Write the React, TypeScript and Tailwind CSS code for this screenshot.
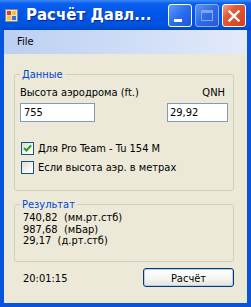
const font = { fontFamily: '"DejaVu Sans Condensed", "Liberation Sans", sans-serif' };

function TitleButton({ kind }: { kind: 'min' | 'max' | 'close' }) {
    if (kind === 'close') {
        return (
            <div className="w-[24px] h-[23px] rounded-[3px] border border-white bg-[linear-gradient(135deg,#f0a48a_0%,#e35a35_35%,#d1401c_100%)] flex items-center justify-center">
                <svg width="12" height="12" viewBox="0 0 12 12">
                    <path d="M1.5 1.5 L10.5 10.5 M10.5 1.5 L1.5 10.5" stroke="white" strokeWidth="2.4" strokeLinecap="square" />
                </svg>
            </div>
        );
    }
    if (kind === 'max') {
        return (
            <div className="w-[24px] h-[23px] rounded-[3px] border border-[#8eaff5] bg-[linear-gradient(135deg,#5e93f2_0%,#2f6ae6_50%,#2759d6_100%)] flex items-center justify-center">
                <div className="w-[12px] h-[11px] border border-[#7fa5f2] border-t-[3px]" />
            </div>
        );
    }
    return (
        <div className="w-[24px] h-[23px] rounded-[3px] border border-white bg-[linear-gradient(135deg,#5a9cff_0%,#2a6ef0_50%,#1d56de_100%)] flex items-end pl-[5px] pb-[4px]">
            <div className="w-[8px] h-[3px] bg-white" />
        </div>
    );
}

function CheckBox({ checked, label }: { checked: boolean; label: string }) {
    return (
        <div className="flex items-center ml-[1px] h-[13px]">
            <div className="w-[13px] h-[13px] border border-[#1c5180] bg-[linear-gradient(135deg,#dcdcd7_0%,#f4f4f0_60%,#ffffff_100%)] flex items-center justify-center">
                {checked && (
                    <svg width="9" height="9" viewBox="0 0 9 9">
                        <path d="M1 4 L3.5 6.5 L8 1.5" stroke="#21a121" strokeWidth="2" fill="none" />
                    </svg>
                )}
            </div>
            <span className="ml-[4px] text-[11px] leading-[13px] text-black">{label}</span>
        </div>
    );
}

export default function App() {
    return (
        <div className="w-[251px] h-[307px] bg-[#0855dd] flex flex-col overflow-hidden" style={font}>
            {/* title bar */}
            <div className="h-[30px] flex items-center pl-[5px] pr-[5px] bg-[linear-gradient(180deg,#3b8cf8_0%,#0a5ef0_12%,#0055e5_50%,#0052df_85%,#0046c8_100%)]">
                <svg width="13" height="13" viewBox="0 0 13 13">
                    <rect x="0.5" y="0.5" width="12" height="12" fill="#e8e4d4" stroke="#8a8a8a" />
                    <rect x="2" y="2" width="4" height="4" fill="#e03c2c" />
                    <rect x="7" y="2" width="4" height="4" fill="#f6c33a" />
                    <rect x="2" y="7" width="4" height="4" fill="#f6c33a" />
                    <rect x="7" y="7" width="4" height="4" fill="#3a6fd8" />
                </svg>
                <span
                    className="ml-[8px] text-white font-bold text-[15px] leading-[18px] [text-shadow:1px_1px_0_#0a2a8a]"
                    style={{ fontFamily: '"DejaVu Sans", "Liberation Sans", sans-serif' }}
                >
                    Расчёт Давл...
                </span>
                <div className="ml-auto flex gap-[3px] mt-[1px]">
                    <TitleButton kind="min" />
                    <TitleButton kind="max" />
                    <TitleButton kind="close" />
                </div>
            </div>

            <div className="flex-1 mx-[4px] mb-[4px] flex flex-col">
                {/* menu */}
                <div className="h-[24px] flex items-center pl-[13px] bg-[linear-gradient(90deg,#bcd0f3_0%,#d2dff7_60%,#e3ebfa_100%)] text-[11px] text-black">
                    File
                </div>

                {/* client */}
                <div className="flex-1 bg-[#ece9d8] pl-[10px] pr-[13px] flex flex-col">
                    <fieldset className="mt-[14px] border border-[#d0d0bf] rounded-[3px] px-[5px] pb-[16px]">
                        <legend className="px-[2px] text-[11px] leading-[13px] text-[#0046d5]">Данные</legend>
                        <div className="mt-[5px] flex justify-between text-[11px] leading-[13px] text-black pr-[3px]">
                            <span>Высота аэродрома (ft.)</span>
                            <span>QNH</span>
                        </div>
                        <div className="mt-[4px] flex justify-between">
                            <div className="w-[75px] h-[19px] border border-[#7f9db9] bg-white pl-[3px] text-[11px] leading-[17px] text-black">755</div>
                            <div className="w-[61px] h-[19px] border border-[#7f9db9] bg-white pl-[2px] text-[11px] leading-[17px] text-black">29,92</div>
                        </div>
                        <div className="mt-[20px] flex flex-col gap-[6px]">
                            <CheckBox checked label="Для Pro Team - Tu 154 M" />
                            <CheckBox checked={false} label="Если высота аэр. в метрах" />
                        </div>
                    </fieldset>

                    <fieldset className="mt-[8px] border border-[#d0d0bf] rounded-[3px] px-[5px] pb-[14px]">
                        <legend className="px-[2px] text-[11px] leading-[11px] text-[#0046d5]">Результат</legend>
                        <div className="mt-[2px] pl-[3px] text-[11px] leading-[11.5px] text-black whitespace-pre">
                            <div>{'740,82  (мм.рт.стб)'}</div>
                            <div>{'987,68  (мБар)'}</div>
                            <div>{'29,17  (д.рт.стб)'}</div>
                        </div>
                    </fieldset>

                    <div className="mt-[6px] flex items-center justify-between">
                        <span className="pl-[9px] pt-[3px] text-[11px] leading-[13px] text-black">20:01:15</span>
                        <div className="w-[91px] h-[19px] rounded-[3px] border border-[#003c74] bg-[linear-gradient(180deg,#ffffff_0%,#f4f4f0_60%,#e3e2da_100%)] shadow-[inset_0_0_0_1px_#b7cdf3] flex items-center justify-center pt-[2px] text-[11px] leading-[13px] text-black">
                            Расчёт
                        </div>
                    </div>
                </div>
            </div>
        </div>
    );
}
